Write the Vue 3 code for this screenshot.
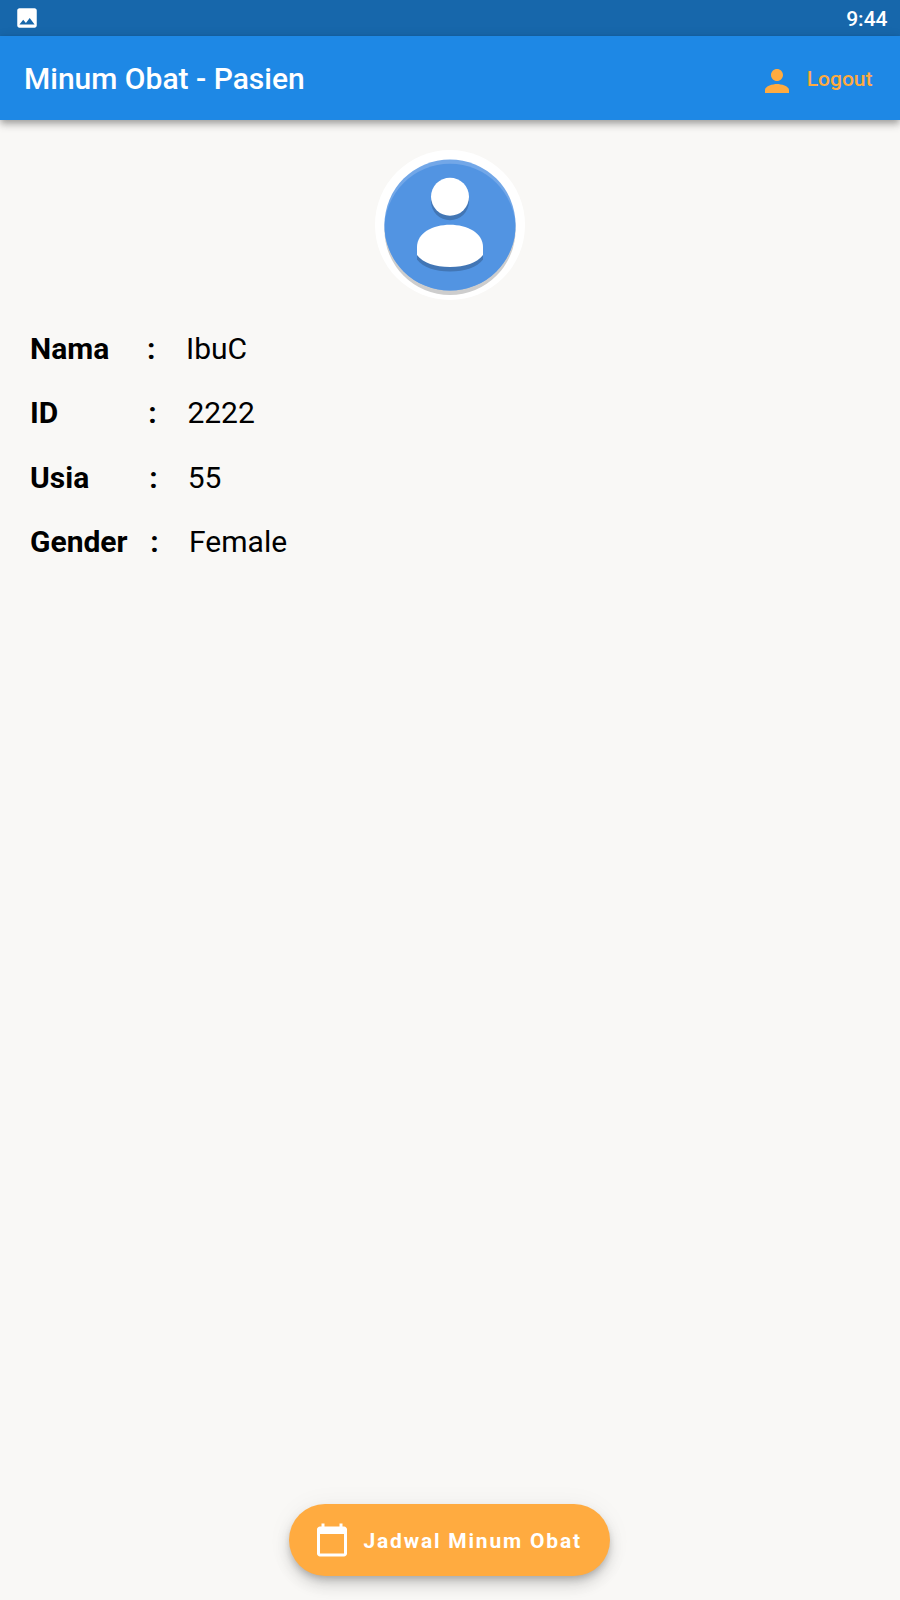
<script setup>
const fields = [
  { label: 'Nama', value: 'IbuC', colon: 117, text: 39 },
  { label: 'ID', value: '2222', colon: 118.2, text: 39.2 },
  { label: 'Usia', value: '55', colon: 119.2, text: 38.5 },
  { label: 'Gender', value: 'Female', colon: 120.2, text: 38.9 },
]
</script>

<template>
  <div class="screen">
    <div class="status">
      <svg class="picture" viewBox="0 0 24 24"><path fill="#fff" d="M21 19V5c0-1.1-.9-2-2-2H5c-1.1 0-2 .9-2 2v14c0 1.1.9 2 2 2h14c1.1 0 2-.9 2-2zM8.500 13.500l2.500 3.010L14.500 12l4.500 6H5l3.500-4.500z" /></svg>
      <span class="clock">9:44</span>
    </div>
    <header class="bar">
      <h1 class="title">Minum Obat - Pasien</h1>
      <button class="logout">
        <svg class="person" viewBox="0 0 24 24"><path fill="#ffab40" d="M12 12c2.210 0 4-1.790 4-4s-1.790-4-4-4-4 1.790-4 4 1.790 4 4 4zm0 2c-2.670 0-8 1.340-8 4v2h16v-2c0-2.660-5.330-4-8-4z" /></svg>
        <span class="logout-text">Logout</span>
      </button>
    </header>
    <main class="content">
      <svg class="avatar" viewBox="0 0 150 150">
        <defs>
          <clipPath id="disc"><circle cx="75" cy="75" r="65.600" /></clipPath>
        </defs>
        <circle cx="75" cy="75" r="75" fill="#fff" />
        <circle cx="75" cy="79.400" r="65.600" fill="#cdcdcd" />
        <circle cx="75" cy="75" r="65.600" fill="#72a7e8" />
        <circle cx="75" cy="79.400" r="65.600" fill="#5294e2" clip-path="url(#disc)" />
        <g fill="#4276b5" transform="translate(0 4.400)">
          <circle cx="75" cy="46.800" r="19" />
          <path d="M75 74.800C58 74.800 42 83 42 97V105C48 113 60 117 75 117S102 113 108 105V97C108 83 92 74.800 75 74.800Z" />
        </g>
        <g fill="#fff">
          <circle cx="75" cy="46.800" r="19" />
          <path d="M75 74.800C58 74.800 42 83 42 97V105C48 113 60 117 75 117S102 113 108 105V97C108 83 92 74.800 75 74.800Z" />
        </g>
      </svg>
      <div class="fields">
        <div v-for="f in fields" :key="f.label" class="field">
          <span class="label" :style="{ width: f.colon + 'px' }">{{ f.label }}</span>
          <span class="colon" :style="{ width: f.text + 'px' }">:</span>
          <span>{{ f.value }}</span>
        </div>
      </div>
    </main>
    <footer class="foot">
      <button class="fab">
        <svg class="calendar" viewBox="0 0 24 24"><path fill="#fff" d="M20 3h-1V1h-2v2H7V1H5v2H4c-1.100 0-2 .9-2 2v16c0 1.100.9 2 2 2h16c1.100 0 2-.9 2-2V5c0-1.100-.9-2-2-2zm0 18H4V8h16v13z" /></svg>
        <span class="fab-text">Jadwal Minum Obat</span>
      </button>
    </footer>
  </div>
</template>

<style>
body { margin: 0; }
</style>

<style scoped>
.screen {
  display: flex;
  flex-direction: column;
  width: 900px;
  height: 1600px;
  overflow: hidden;
  background: #f9f8f6;
  color: #000;
  font-family: Roboto, sans-serif;
}
.status {
  display: flex;
  align-items: center;
  justify-content: space-between;
  box-sizing: border-box;
  height: 36px;
  padding: 0 12.500px 0 14px;
  background: #1767ab;
}
.picture { width: 26px; height: 26px; }
.clock { color: #fff; font-size: 21px; font-weight: 500; line-height: 24px; padding-top: 2px; }
.bar {
  display: flex;
  align-items: center;
  justify-content: space-between;
  box-sizing: border-box;
  height: 84px;
  padding: 0 27px 0 24px;
  background: #1e88e5;
  box-shadow: 0 3px 6px -1px rgba(0, 0, 0, 0.2), 0 6px 7.500px rgba(0, 0, 0, 0.14), 0 1px 10px rgba(0, 0, 0, 0.12);
}
.title { margin: 0; padding-top: 2px; color: #fff; font-size: 30px; font-weight: 500; line-height: 36px; }
button { display: flex; align-items: center; border: 0; font-family: inherit; }
.logout { gap: 11.500px; padding: 0 0.500px 0 0; background: none; color: #ffab40; font-size: 21px; font-weight: 500; }
.logout-text { padding-top: 2px; }
.person { width: 36px; height: 36px; margin-top: 6px; }
.content { display: flex; flex: 1; flex-direction: column; padding: 30px; }
.avatar { align-self: center; width: 150px; height: 150px; }
.fields { padding-top: 16px; }
.field { display: flex; align-items: center; height: 64.500px; font-size: 30px; line-height: 35px; }
.label, .colon { flex: none; font-weight: 700; }
.foot { display: flex; justify-content: center; padding-bottom: 24px; }
.fab {
  box-sizing: border-box;
  width: 321px;
  height: 72px;
  gap: 13.500px;
  margin-right: 1px;
  padding: 0 0 0 25px;
  border-radius: 36px;
  background: #ffab40;
  box-shadow: 0 4.500px 7.500px -1.500px rgba(0, 0, 0, 0.2), 0 9px 15px rgba(0, 0, 0, 0.14), 0 1.500px 27px rgba(0, 0, 0, 0.05);
  color: #fff;
  font-size: 21px;
  font-weight: 700;
  letter-spacing: 1.800px;
  white-space: nowrap;
}
.fab-text { padding-top: 2px; }
.calendar { flex: none; width: 36px; height: 36px; }
</style>
